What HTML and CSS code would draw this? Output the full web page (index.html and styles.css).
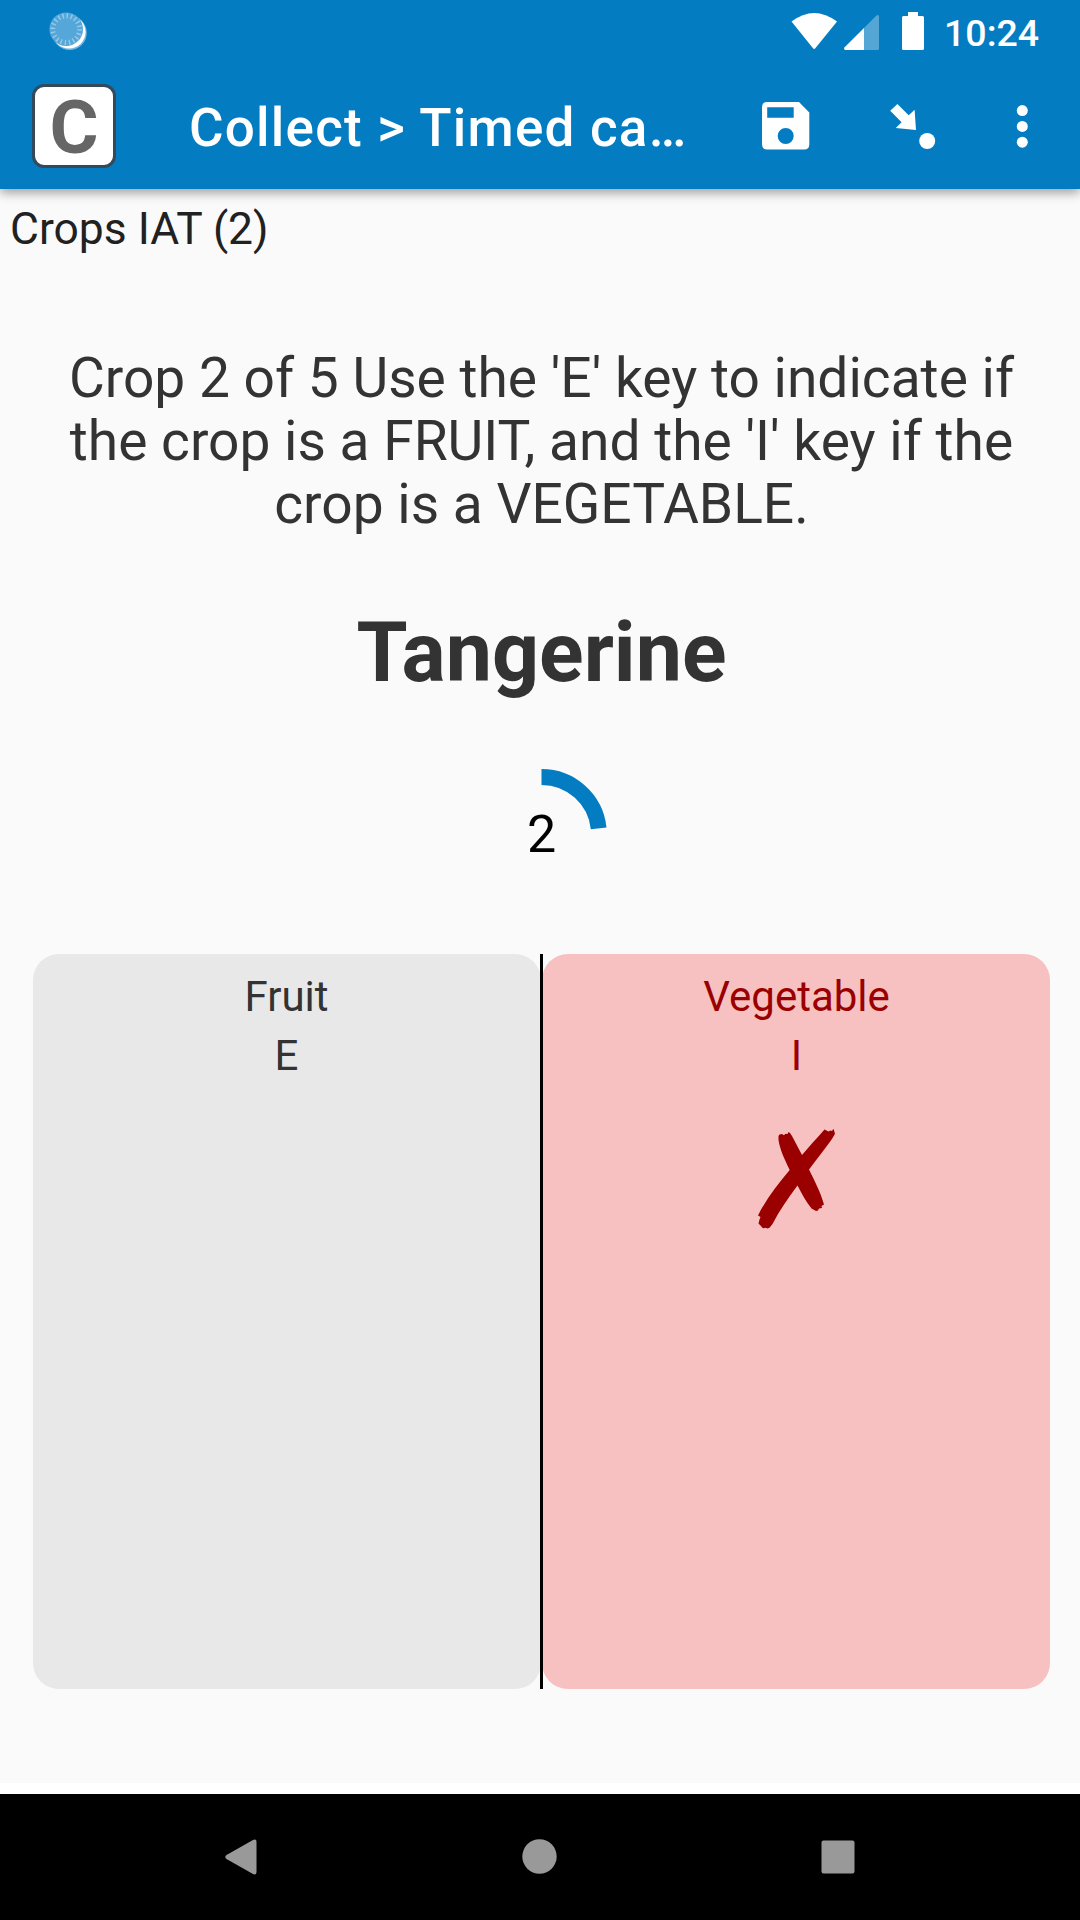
FILE: index.html
```html
<!DOCTYPE html>
<html lang="en">
<head>
<meta charset="utf-8">
<title>Collect</title>
<link rel="stylesheet" href="styles.css">
</head>
<body>
<div class="screen">
  <header class="top">
    <div class="status">
      <svg class="sync" width="38" height="38" viewBox="49 12 38 38">
        <circle cx="69.6" cy="32.8" r="17.2" fill="#fff" fill-opacity=".45"/>
        <circle cx="69" cy="32" r="16.6" fill="#fff"/>
        <circle cx="66.2" cy="29.2" r="16.8" fill="#54a7d8"/>
        <circle cx="66.2" cy="29.2" r="13.4" fill="none" stroke="#98cae7" stroke-width="5" stroke-dasharray="1.4 2.81"/>
      </svg>
      <div class="status-icons">
        <svg width="135" height="40" viewBox="790 11 135 40" fill="#fff">
          <path d="M791.5 21.5Q803 13 814.2 13T837 21.5L815.3 48.3Q814.2 49.6 813 48.3Z"/>
          <path d="M864 28V50H845Q843.4 49.5 844.4 47.6Z"/>
          <path d="M864 28L876.2 15.7Q878 14.300 879 16V48.500Q879 50 877.500 50H864Z" opacity=".32"/>
          <path d="M908 12H918V16H922.500Q924 16 924 17.500V48.500Q924 50 922.500 50H903.500Q902 50 902 48.500V17.500Q902 16 903.500 16H908Z"/>
        </svg>
        <span class="clock">10:24</span>
      </div>
    </div>
    <div class="appbar">
      <div class="logo">C</div>
      <h1 class="title">Collect &gt; Timed ca…</h1>
      <svg class="actions" width="270" height="50" viewBox="761 101 270 50" fill="#fff">
        <path fill-rule="evenodd" d="M767.300 102H799L809.300 112.500V144.200Q809.300 149.500 804 149.500H767.300Q762 149.500 762 144.200V107.300Q762 102 767.300 102ZM767.200 107.200V117.800H793.700V107.200ZM785.700 128A8 8 0 1 0 785.700 144A8 8 0 1 0 785.700 128Z"/>
        <path d="M890.200 110.800L897.400 103.900L908.700 115.200L914.600 109.700L916 129.900L895.700 128L901.600 122.300Z"/>
        <circle cx="927.200" cy="141" r="8"/>
        <circle cx="1022.300" cy="110.600" r="5.500"/>
        <circle cx="1022.300" cy="126.400" r="5.500"/>
        <circle cx="1022.300" cy="142.200" r="5.500"/>
      </svg>
    </div>
  </header>
  <main class="content">
    <h2 class="form-name">Crops IAT (2)</h2>
    <p class="prompt">Crop 2 of 5 Use the 'E' key to indicate if<br>the crop is a FRUIT, and the 'I' key if the<br>crop is a VEGETABLE.</p>
    <div class="word">Tangerine</div>
    <div class="timer">
      <svg class="ring" width="132" height="132" viewBox="0 0 132 132">
        <path d="M65.500 9A57.500 57.500 0 0 1 122.660 60.280" fill="none" stroke="#037cc2" stroke-width="15.800"/>
      </svg>
      <span class="count">2</span>
    </div>
    <div class="choices">
      <section class="choice">
        <div>Fruit</div>
        <div>E</div>
      </section>
      <div class="divider"></div>
      <section class="choice wrong">
        <div>Vegetable</div>
        <div>I</div>
        <svg class="cross" width="78" height="101" viewBox="758 1128 78 101" fill="#9b0000">
          <path d="M779.500 1134.500L782 1134L784 1135.300L785.500 1133.800L787.500 1134L788.500 1132L790 1133L792 1136L802 1155C809 1146.500 817 1138 824.500 1129.500L826.500 1130.500L828.500 1131.500L830.500 1130.500L832 1131L833.500 1128.800L835 1133.800C832.500 1139 829.500 1142.500 826.500 1146.500L809 1169.500C815 1182 820 1191 824 1204.500L821.500 1206L822 1208L819 1208.500L818 1210.500L816 1211L811.500 1208.500C806 1202 802 1194 797.500 1185.500C788 1198 779.500 1210.500 772.500 1224L769.500 1227.800L767.500 1228.500L765.500 1227.700L763.500 1228.300L762 1227.500L761 1226L758.500 1223.500L759.500 1219.500L760.500 1217L758 1215.500C766.500 1198.500 777.500 1184.500 789.700 1170C784.500 1159 780 1150 778.500 1140L778.500 1136Z"/>
        </svg>
      </section>
    </div>
  </main>
  <nav class="navbar">
    <svg width="1080" height="126" viewBox="0 1794 1080 126" fill="#999">
      <path d="M226.500 1855L253 1840Q256.500 1838.500 256.500 1842V1871.500Q256.500 1875.500 253 1874L226.500 1859Q224 1857 226.500 1855Z"/>
      <circle cx="539.500" cy="1856.500" r="17.200"/>
      <rect x="821.500" y="1840.500" width="33" height="33" rx="2"/>
    </svg>
  </nav>
</div>
</body>
</html>
```
FILE: styles.css
```css
* { box-sizing: border-box; }
body {
  margin: 0;
  background: #fff;
  font-family: Roboto, "Liberation Sans", sans-serif;
}
h1, h2, p { margin: 0; font-weight: 400; }
svg { display: block; flex: none; }
.screen {
  width: 1080px;
  height: 1920px;
  display: flex;
  flex-direction: column;
  overflow: hidden;
}
.top {
  height: 189px;
  flex: none;
  background: #037cc2;
  color: #fff;
  box-shadow: 0 4px 10px rgba(0, 0, 0, .36);
  z-index: 1;
}
.status {
  height: 63px;
  display: flex;
  justify-content: space-between;
  padding: 11px 42px 0 49px;
}
.sync { margin-top: 1px; }
.status-icons { display: flex; }
.clock {
  width: 94px;
  margin-left: 19px;
  padding-top: 1px;
  font-size: 37.5px;
  line-height: 43px;
  font-weight: 500;
  white-space: nowrap;
}
.appbar {
  height: 126px;
  display: flex;
  align-items: center;
  padding: 0 49px 0 32px;
}
.logo {
  width: 84px;
  height: 84px;
  border: 3px solid #34495a;
  border-radius: 12px;
  background: #fff;
  color: #666;
  font-size: 75px;
  line-height: 80px;
  font-weight: 700;
  text-align: center;
}
.title {
  width: 572px;
  margin-left: 73px;
  padding-top: 4px;
  font-size: 53px;
  line-height: 62px;
  font-weight: 500;
  letter-spacing: 1.22px;
  white-space: nowrap;
}
.content {
  height: 1594px;
  flex: none;
  margin-bottom: 11px;
  background: #fafafa;
  display: flex;
  flex-direction: column;
}
.form-name {
  margin: 14px 0 0 10px;
  font-size: 44.4px;
  line-height: 53px;
  color: #212121;
}
.prompt {
  margin-top: 91px;
  padding-left: 3px;
  font-size: 55.1px;
  line-height: 63px;
  color: #333;
  text-align: center;
}
.word {
  margin-top: 68px;
  padding-left: 3px;
  font-size: 82.5px;
  line-height: 98px;
  font-weight: 700;
  color: #333;
  text-align: center;
}
.timer {
  display: grid;
  justify-content: center;
  align-items: center;
  margin: 66px 0 54px 3px;
}
.ring, .count { grid-area: 1 / 1; }
.count {
  padding-top: 2px;
  font-size: 52px;
  line-height: 60px;
  text-align: center;
  color: #000;
}
.choices {
  height: 735px;
  display: flex;
  padding: 0 30px 0 33px;
}
.choice {
  flex: 1;
  padding: 13px 1px 0 0;
  border-radius: 26px;
  background: #e8e8e8;
  color: #333;
  font-size: 42px;
  line-height: 59px;
  text-align: center;
}
.wrong { padding: 13px 0 0 1px; background: #f7c1c1; color: #9b0000; }
.divider { width: 3px; margin: 0 -1px; background: #000; z-index: 1; }
.cross { margin: 43px auto 0; }
.navbar { height: 126px; flex: none; background: #000; }
```
